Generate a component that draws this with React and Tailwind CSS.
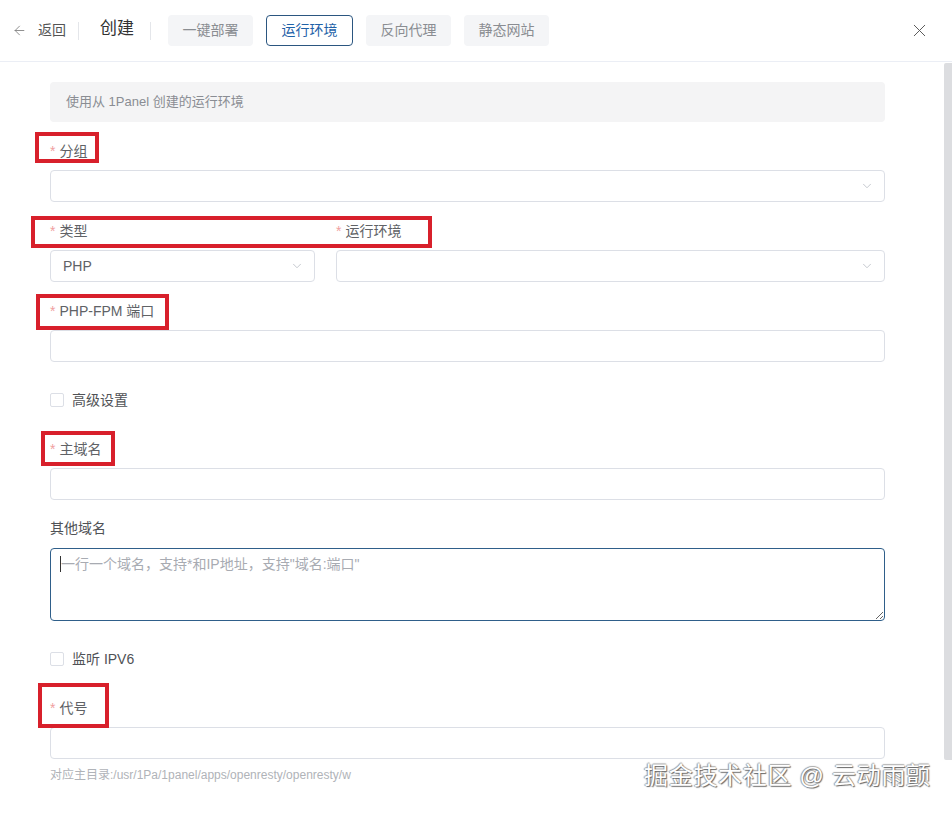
import React from "react";
import { ChevronDown, ArrowLeft, X } from "lucide-react";

const font = { fontFamily: '"Liberation Sans", "Noto Sans CJK SC", sans-serif' };

const tabs = ["一键部署", "运行环境", "反向代理", "静态网站"];

const Label = ({ text, required = true }) => (
  <div className="h-[22px] leading-[22px] text-[14px] text-[#606266] mb-2">
    {required && <span className="text-[#f0a0a0] mr-1">*</span>}
    {text}
  </div>
);

const Box = ({ children, arrow = false }) => (
  <div className="h-8 border border-[#dcdfe6] rounded-[4px] bg-white flex items-center justify-between px-3 text-[14px] text-[#606266]">
    <span>{children}</span>
    {arrow && <ChevronDown size={14} strokeWidth={1.3} className="text-[#b4b8bf] -mr-0.5" />}
  </div>
);

const Check = ({ text }) => (
  <div className="flex items-center gap-2 h-[22px] text-[14px] text-[#505256]">
    <span className="w-[14px] h-[14px] border border-[#dcdfe6] rounded-[2px] bg-white" />
    {text}
  </div>
);

const Mark = ({ className }) => (
  <div className={`absolute border-4 border-[#d8202b] pointer-events-none ${className}`} />
);

export default function App() {
  return (
    <div className="relative w-[952px] h-[815px] bg-white overflow-hidden" style={font}>
      <header className="h-[62px] border-b border-[#ebeef5] flex items-center pl-3 pr-[26px]">
        <ArrowLeft size={15} strokeWidth={1.3} className="text-[#777]" />
        <span className="ml-[11px] text-[14px] text-[#555]">返回</span>
        <span className="ml-3 w-px h-[18px] bg-[#e4e6ea]" />
        <span className="ml-[21px] text-[17px] text-[#333] -mt-1">创建</span>
        <span className="ml-4 w-px h-[18px] bg-[#e4e6ea]" />
        <div className="ml-[17px] flex gap-[13px]">
          {tabs.map((t) =>
            t === "运行环境" ? (
              <div key={t} className="w-[87px] h-[31px] rounded-[4px] border border-[#2b5680] bg-white text-[#1f62a8] text-[14px] flex items-center justify-center">
                {t}
              </div>
            ) : (
              <div key={t} className="w-[85px] h-[31px] rounded-[4px] bg-[#f4f5f7] text-[#8a8d92] text-[14px] flex items-center justify-center">
                {t}
              </div>
            )
          )}
        </div>
        <X size={21} strokeWidth={1.1} className="ml-auto -mr-1 text-[#555]" />
      </header>

      <div className="flex">
        <div className="flex-1 pl-[50px] pr-[59px] pt-5">
          <div className="h-10 rounded-[4px] bg-[#f4f4f5] flex items-center px-4 text-[13px] text-[#8a8d93]">
            使用从 1Panel 创建的运行环境
          </div>

          <div className="mt-[18px]">
            <Label text="分组" />
            <Box arrow />
          </div>

          <div className="mt-[18px] grid grid-cols-[265px_1fr] gap-x-[21px]">
            <div>
              <Label text="类型" />
              <Box arrow>PHP</Box>
            </div>
            <div>
              <Label text="运行环境" />
              <Box arrow />
            </div>
          </div>

          <div className="mt-[18px]">
            <Label text="PHP-FPM 端口" />
            <Box />
          </div>

          <div className="mt-[27px]">
            <Check text="高级设置" />
          </div>

          <div className="mt-[27px]">
            <Label text="主域名" />
            <Box />
          </div>

          <div className="mt-[17px]">
            <div className="h-[22px] leading-[22px] text-[14px] text-[#505256] mb-[9px]">其他域名</div>
            <div className="relative">
              <textarea
                className="block w-full h-[73px] border border-[#2f5f8a] rounded-[4px] px-[10px] py-[5px] text-[14px] text-[#606266] placeholder:text-[#a8abb2] outline-none"
                placeholder={'一行一个域名，支持*和IP地址，支持"域名:端口"'}
                style={font}
              />
              <span className="absolute left-[10px] top-[8px] w-px h-[16px] bg-[#333]" />
            </div>
          </div>

          <div className="mt-[27px]">
            <Check text="监听 IPV6" />
          </div>

          <div className="mt-[27px]">
            <Label text="代号" />
            <Box />
          </div>

          <div className="mt-[9px] whitespace-nowrap text-[12px] leading-[14px] text-[#b0b3b8]">
            对应主目录:/usr/1Pa/1panel/apps/openresty/openresty/w
          </div>
        </div>

        <div className="w-2 pt-px">
          <div className="h-[697px] bg-[#dcdde0] rounded-l-[2px]" />
        </div>
      </div>

      <Mark className="left-[35px] top-[132px] w-[64px] h-[31px]" />
      <Mark className="left-[31px] top-[216px] w-[401px] h-[32px]" />
      <Mark className="left-[36px] top-[294px] w-[133px] h-[36px]" />
      <Mark className="left-[41px] top-[431px] w-[74px] h-[35px]" />
      <Mark className="left-[38px] top-[683px] w-[71px] h-[45px]" />

      <div
        className="absolute left-[644px] top-[761px] text-[24px] leading-[30px] tracking-[0.7px] text-white"
        style={{ ...font, textShadow: "1px 1px 1px #666, -1px 0 1px #999, 0 -1px 1px #aaa" }}
      >
        掘金技术社区 @ 云动雨颤
      </div>
    </div>
  );
}
